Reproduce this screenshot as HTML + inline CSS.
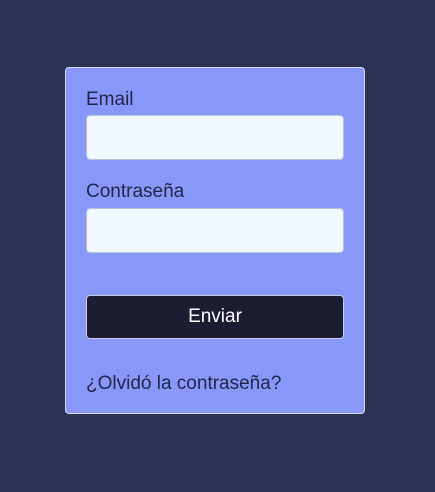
<!DOCTYPE html>
<html><head><meta charset="utf-8"><style>
*{box-sizing:border-box;margin:0;padding:0}
body{width:435px;height:492px;background:#2c3354;font-family:"Liberation Sans",sans-serif;position:relative;overflow:hidden}
.card{position:absolute;left:65px;top:67px;width:300px;height:347px;background:#8798f8;border:1px solid #d6dbf5;border-radius:4px}
.lbl{position:absolute;left:20px;font-size:19px;color:#23254a}
.inp{position:absolute;left:20px;width:258px;height:45px;background:#f0f7fe;border:1px solid #b8bfd8;border-radius:4px}
.btn{position:absolute;left:20px;top:227px;width:258px;height:44px;background:#1c1d33;border:1px solid #c8cce0;border-radius:4px;color:#fff;font-size:19px;text-align:center;line-height:42px}
.link{position:absolute;left:20px;top:305px;font-size:19px;color:#23254a}
</style></head><body>
<div class="card">
<div class="lbl" style="top:21px">Email</div>
<div class="inp" style="top:47px"></div>
<div class="lbl" style="top:113px">Contraseña</div>
<div class="inp" style="top:140px"></div>
<div class="btn">Enviar</div>
<div class="link">¿Olvidó la contraseña?</div>
</div>
</body></html>
